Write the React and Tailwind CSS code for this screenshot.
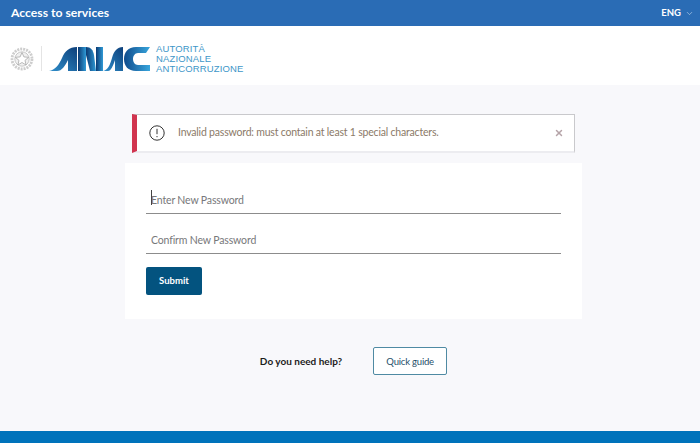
import React from 'react';
import { ChevronDown, X } from 'lucide-react';

const Emblem = () => (
    <svg width="24" height="26" viewBox="0 0 24 26" fill="none">
        <circle cx="12" cy="13" r="10" stroke="#cdcdcd" strokeWidth="2.8" strokeDasharray="2 1" />
        <circle cx="12" cy="13" r="7.2" fill="#f0f0f0" stroke="#bcbcbc" strokeWidth="0.8" />
        <path d="M12 6.5l1.9 4.4 4.7.4-3.6 3.1 1.1 4.6-4.1-2.5-4.1 2.5 1.1-4.6-3.6-3.1 4.7-.4z" fill="#fff" stroke="#a8a8a8" strokeWidth="0.8" />
    </svg>
);

const AnacLogo = () => (
    <svg width="102" height="26" viewBox="0 0 102 26">
        <defs>
            <linearGradient id="swoosh" x1="0" y1="1" x2="1" y2="0">
                <stop offset="0" stopColor="#2f8fcb" />
                <stop offset="1" stopColor="#0d3f7a" />
            </linearGradient>
            <linearGradient id="stem" x1="0" y1="0" x2="1" y2="0">
                <stop offset="0" stopColor="#0b3a73" />
                <stop offset="1" stopColor="#2f9ad6" />
            </linearGradient>
            <linearGradient id="curve" x1="0" y1="0" x2="1" y2="0">
                <stop offset="0" stopColor="#0f4b8c" />
                <stop offset="1" stopColor="#38a6dd" />
            </linearGradient>
        </defs>
        <path d="M0 25 C6 24 10 19 13 12 C16 5 20 1 28 1 L28 25 L19 25 L19 14 C16 20 13 25 8 25 Z" fill="url(#swoosh)" />
        <path d="M29 1 L37 1 L37 25 L29 25 Z" fill="url(#stem)" />
        <path d="M37 1 C42 1 44 4 45 9 L47 25 L41 25 L37 9 Z" fill="url(#stem)" />
        <path d="M47 1 L54 1 L54 25 L47 25 Z" fill="url(#stem)" />
        <path d="M54 25 C59 24 61 19 63 12 C65 5 68 1 74 1 L74 25 L66 25 L66 14 C64 20 62 25 59 25 Z" fill="url(#swoosh)" />
        <path d="M101 1 L87 1 C79 1 75 6 75 13 C75 20 79 25 87 25 L101 25 L101 19 L89 19 C86 19 84 16 84 13 C84 10 86 7 89 7 L97 7 Z" fill="url(#curve)" />
    </svg>
);

const PasswordField = ({ label, focused }) => (
    <div className="relative">
        {focused && <span className="absolute left-[5px] top-[12px] w-px h-[15px] bg-[#444]" />}
        <input
            type="password"
            placeholder={label}
            className="w-full h-[36px] px-[5px] pt-[8px] border-b border-[#8c8c8c] bg-white text-[10.5px] tracking-[-0.15px] outline-none placeholder:text-[#77787a]"
        />
    </div>
);

const App = () => {
    return (
        <div className="w-[700px] h-[443px] flex flex-col overflow-hidden bg-[#f8f8fb] font-['Lato','Noto_Sans',sans-serif]">
            {/* Top bar */}
            <div className="h-[26px] shrink-0 flex items-center justify-between pl-[11px] pr-[6px] bg-[#2a6cb5] text-white">
                <span className="text-[12.2px] font-bold">Access to services</span>
                <div className="flex items-center gap-[4px]">
                    <span className="text-[9.5px] font-bold">ENG</span>
                    <ChevronDown size={9} strokeWidth={1.5} className="text-[#cfe0f2]" />
                </div>
            </div>

            {/* Logo band */}
            <div className="h-[59px] shrink-0 flex items-center bg-white pl-[10px] pt-[6px]">
                <Emblem />
                <div className="w-px h-[25px] bg-[#e4e4e4] ml-[7px] mr-[7px]" />
                <AnacLogo />
                <div className="ml-[5px] text-[9.5px] leading-[10px] tracking-[0.15px] text-[#3d96c8] font-['Liberation_Sans',sans-serif]">
                    <div>AUTORITÀ</div>
                    <div>NAZIONALE</div>
                    <div>ANTICORRUZIONE</div>
                </div>
            </div>

            {/* Content */}
            <div className="flex-1 flex flex-col items-center pt-[29px] pl-[7px]">
                <div className="w-[443px] h-[39px] flex items-center bg-white border-t border-r border-[#c9c9cc] border-b-2 border-b-[#ececf0] border-l-[5px] border-l-[#d1344f]">
                    <svg width="16" height="16" viewBox="0 0 16 16" fill="none" className="ml-[12px]">
                        <circle cx="8" cy="8" r="7.2" stroke="#333" strokeWidth="1" />
                        <path d="M8 3.8v5.4M8 11v1.2" stroke="#333" strokeWidth="1" />
                    </svg>
                    <span className="ml-[13px] text-[10.5px] tracking-[-0.2px] text-[#8b7a68]">Invalid password: must contain at least 1 special characters.</span>
                    <X size={10} strokeWidth={3.5} className="ml-auto mr-[10px] text-[#b5a3a8]" />
                </div>

                <div className="w-[457px] h-[156px] mt-[10px] bg-white px-[21px] pt-[15px]">
                    <div className="flex flex-col gap-[4px]">
                        <PasswordField label="Enter New Password" focused />
                        <PasswordField label="Confirm New Password" />
                    </div>
                    <button className="block w-[56px] h-[28px] mt-[13px] rounded-[2px] bg-[#03537f] text-white text-[9.5px] font-bold">Submit</button>
                </div>

                <div className="flex items-center mt-[28px]">
                    <span className="text-[10px] font-bold text-[#1c1c1c]">Do you need help?</span>
                    <button className="w-[74px] h-[28px] ml-[31px] pt-[2px] rounded-[2px] border border-[#4f8aa3] bg-white text-[9.5px] tracking-[-0.2px] text-[#1f4f6a]">Quick guide</button>
                </div>
            </div>

            {/* Footer */}
            <div className="h-[12px] shrink-0 bg-[#0073bb]" />
        </div>
    );
};

export default App;
